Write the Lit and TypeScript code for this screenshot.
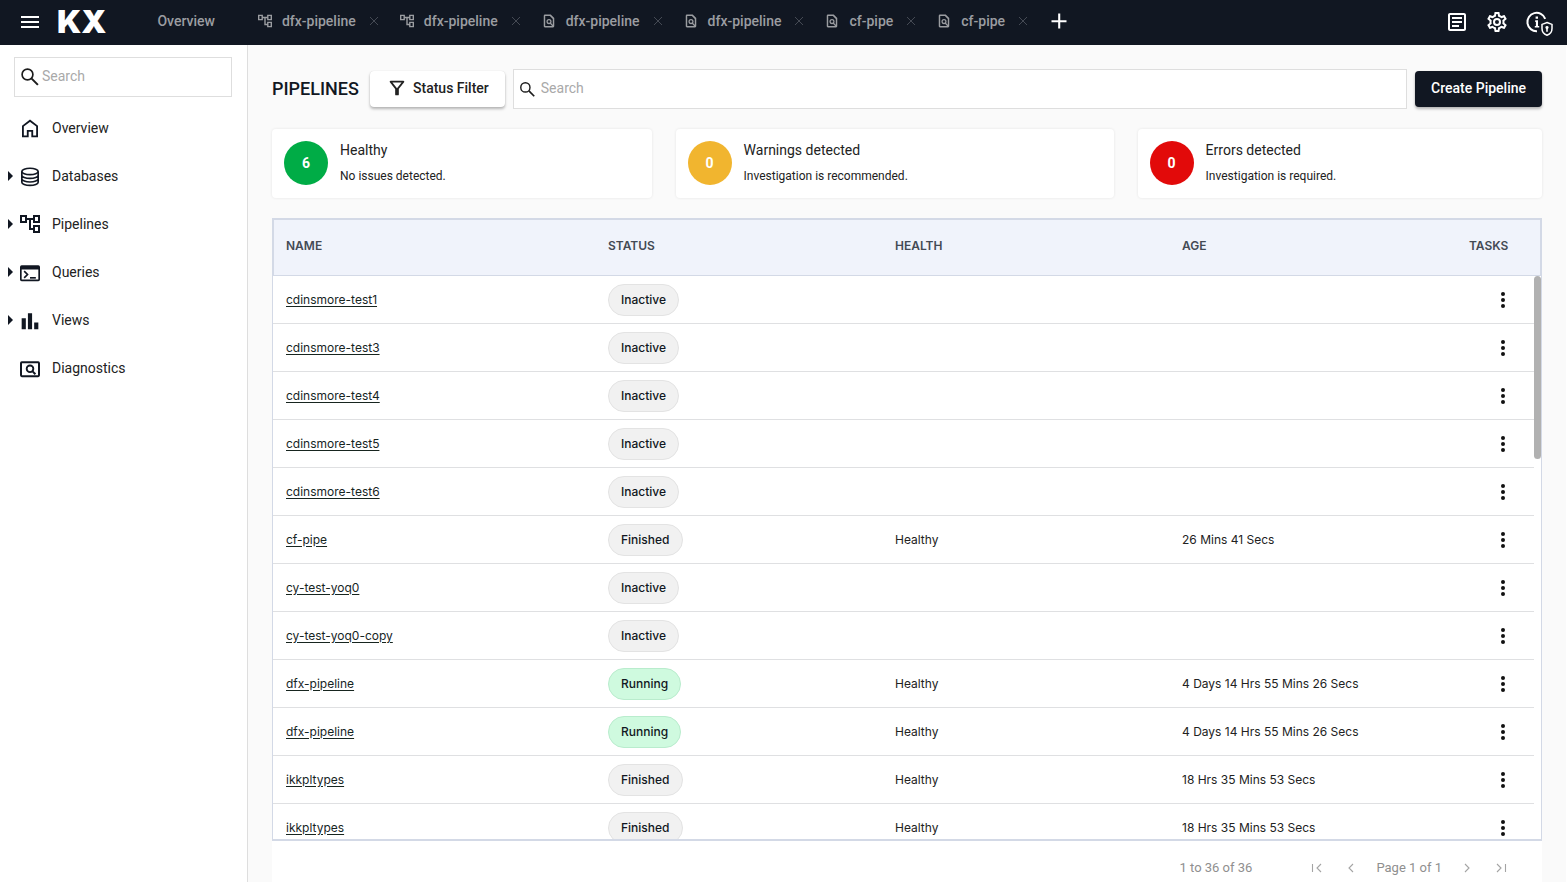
import { LitElement, html, css, svg, nothing } from "lit";
import { customElement, property, state } from "lit/decorators.js";
import { classMap } from "lit/directives/class-map.js";

const ICONS: Record<string, unknown> = {
  menu: svg`<path d="M3 6h18v2H3zM3 11h18v2H3zM3 16h18v2H3z"/>`,
  tree: svg`<path transform="matrix(1.2 0 0 1.2 -2.4 -2.4)" d="M22 11V3h-7v3H9V3H2v8h7V8h2v10h4v3h7v-8h-7v3h-2V8h2v3h7zM7 9H4V5h3v4zm10 6h3v4h-3v-4zm0-10h3v4h-3V5z"/>`,
  page: svg`<path fill-rule="evenodd" d="M6 1h9l6 6v14a2 2 0 0 1-2 2H5a2 2 0 0 1-2-2V3a2 2 0 0 1 2-2zM5.500 3.500v17h13v-12l-5-5z"/><circle cx="12" cy="13" r="3.300" fill="none" stroke="currentColor" stroke-width="2.200"/><path d="M14 15.500l5 5" stroke="currentColor" stroke-width="2.200"/>`,
  close: svg`<path d="M0 0l24 24M24 0L0 24" stroke="currentColor" stroke-width="3" fill="none"/>`,
  plus: svg`<path d="M11 3h2.500v8H21v2.500h-7.500V21H11v-7.500H3V11h8z"/>`,
  article: svg`<path d="M19 5v14H5V5h14m0-2H5c-1.100 0-2 .9-2 2v14c0 1.100.9 2 2 2h14c1.100 0 2-.9 2-2V5c0-1.100-.9-2-2-2zM14 17H7v-2h7v2zm3-4H7v-2h10v2zm0-4H7V7h10v2z"/>`,
  gear: svg`<path fill-rule="evenodd" d="M19.430 12.980c.04-.32.07-.64.07-.98 0-.34-.03-.66-.07-.98l2.110-1.650c.19-.15.24-.42.12-.64l-2-3.460c-.09-.16-.26-.25-.44-.25-.06 0-.12.01-.17.03l-2.490 1c-.52-.4-1.080-.73-1.690-.98l-.38-2.650C14.460 2.180 14.250 2 14 2h-4c-.25 0-.46.18-.49.42l-.38 2.650c-.61.25-1.170.59-1.690.98l-2.490-1c-.06-.02-.12-.03-.18-.03-.17 0-.34.09-.43.25l-2 3.460c-.13.22-.07.49.12.64l2.110 1.650c-.04.32-.07.65-.07.98 0 .33.03.66.07.98l-2.110 1.650c-.19.15-.24.42-.12.64l2 3.460c.09.16.26.25.44.25.06 0 .12-.01.17-.03l2.490-1c.52.4 1.080.73 1.690.98l.38 2.650c.03.24.24.42.49.42h4c.25 0 .46-.18.49-.42l.38-2.650c.61-.25 1.170-.59 1.690-.98l2.490 1c.06.02.12.03.18.03.17 0 .34-.09.43-.25l2-3.460c.12-.22.07-.49-.12-.64l-2.110-1.650zm-1.980-1.710c.04.31.05.52.05.73 0 .21-.02.43-.05.73l-.14 1.130.89.7 1.080.84-.7 1.210-1.270-.51-1.040-.42-.9.68c-.43.32-.84.56-1.250.73l-1.060.43-.16 1.130-.2 1.350h-1.400l-.19-1.350-.16-1.130-1.060-.43c-.43-.18-.83-.41-1.230-.71l-.91-.7-1.060.43-1.270.51-.7-1.210 1.080-.84.89-.7-.14-1.130c-.03-.31-.05-.54-.05-.74s.02-.43.05-.73l.14-1.130-.89-.7-1.080-.84.7-1.210 1.270.51 1.040.42.9-.68c.43-.32.84-.56 1.250-.73l1.060-.43.16-1.130.2-1.350h1.390l.19 1.350.16 1.130 1.060.43c.43.18.83.41 1.230.71l.91.7 1.060-.43 1.270-.51.7 1.210-1.070.85-.89.7.14 1.130z"/><circle cx="12" cy="12" r="3" fill="none" stroke="currentColor" stroke-width="2"/>`,
  info: svg`<path d="M20.200 8.800A9.200 9.200 0 1 0 12 21.200" fill="none" stroke="currentColor" stroke-width="2"/><path d="M10.200 10.300h2.800v5.700h1.200v1.600h-4.400V16h1.100v-4.100h-.7zM10.600 6.500h2.400v2.300h-2.400z"/><path d="M22 12.500l5 1.900v4c0 3.200-2.100 5.700-5 6.800-2.900-1.100-5-3.600-5-6.800v-4z" fill="none" stroke="currentColor" stroke-width="1.500"/><path d="M22 15.900a1.600 1.600 0 0 1 .8 3v2.800h-1.600v-2.800a1.600 1.600 0 0 1 .8-3z"/>`,
  search: svg`<circle cx="9" cy="9" r="6.500" fill="none" stroke="currentColor" stroke-width="2"/><path d="M14 14l7.500 7.500" fill="none" stroke="currentColor" stroke-width="2.400"/>`,
  home: svg`<path d="M3.500 22V9.700L12 3.300l8.500 6.400V22h-5.800v-6.500H9.300V22z" fill="none" stroke="currentColor" stroke-width="2.200"/>`,
  database: svg`<g fill="none" stroke="currentColor" stroke-width="2"><ellipse cx="12" cy="6.500" rx="9.800" ry="3.800"/><path d="M2.200 6.500v13c0 2.100 4.400 3.800 9.800 3.800s9.800-1.700 9.800-3.800v-13M2.200 11c0 2.100 4.400 3.800 9.800 3.800s9.800-1.700 9.800-3.800M2.200 15.400c0 2.100 4.400 3.800 9.800 3.800s9.800-1.700 9.800-3.800"/></g>`,
  terminal: svg`<path fill-rule="evenodd" d="M2 4h20a2 2 0 0 1 2 2v15a2 2 0 0 1-2 2H2a2 2 0 0 1-2-2V6a2 2 0 0 1 2-2zm0 5v12h20V9z"/><path d="M5 11l4 4-4 4" fill="none" stroke="currentColor" stroke-width="2"/><path d="M12 18h7v2h-7z"/>`,
  bars: svg`<path d="M2 10h5v13H2zM9.500 4h5v19h-5zM17 15h5v8h-5z"/>`,
  diagnose: svg`<rect x="1.200" y="5.200" width="21.600" height="16.600" rx="1" fill="none" stroke="currentColor" stroke-width="2.400"/><circle cx="12" cy="13" r="4" fill="none" stroke="currentColor" stroke-width="2.200"/><path d="M14.500 15.500l4 4" stroke="currentColor" stroke-width="2.400"/>`,
  funnel: svg`<path fill-rule="evenodd" d="M7 6h10l-5.010 6.300zM4.250 5.610C6.270 8.200 10 13 10 13v6c0 .55.45 1 1 1h2c.55 0 1-.45 1-1v-6s3.720-4.800 5.740-7.390C20.250 4.950 19.780 4 18.950 4H5.040c-.83 0-1.300.95-.79 1.610z"/>`,
  dots: svg`<circle cx="12" cy="4.800" r="2.400"/><circle cx="12" cy="12" r="2.400"/><circle cx="12" cy="19.200" r="2.400"/>`,
  first: svg`<path d="M3 4v16M20 4l-8 8 8 8" fill="none" stroke="currentColor" stroke-width="2.200"/>`,
  prev: svg`<path d="M16 4l-8 8 8 8" fill="none" stroke="currentColor" stroke-width="2.200"/>`,
  next: svg`<path d="M8 4l8 8-8 8" fill="none" stroke="currentColor" stroke-width="2.200"/>`,
  last: svg`<path d="M21 4v16M4 4l8 8-8 8" fill="none" stroke="currentColor" stroke-width="2.200"/>`,
};

@customElement("kx-icon")
class KxIcon extends LitElement {
  static styles = css`
    :host { display: inline-flex; width: 20px; height: 20px; flex: none; }
    .glyph { width: 100%; height: 100%; fill: currentColor; overflow: visible; }
  `;
  @property() name = "";
  render() {
    return html`<svg class="glyph" viewBox="0 0 24 24" aria-hidden="true">${ICONS[this.name]}</svg>`;
  }
}

@customElement("kx-topbar")
class KxTopbar extends LitElement {
  static styles = css`
    :host { display: flex; align-items: center; height: 45px; padding: 0 18px 1px; background: #111722; color: #fff; box-sizing: border-box; }
    button { border: 0; padding: 0; background: none; color: inherit; font: inherit; display: inline-flex; cursor: pointer; }
    .menu kx-icon { width: 24px; height: 24px; }
    .logo { margin-left: 15px; font: 900 32px/44px Inter, sans-serif; color: #fff; text-decoration: none; }
    .tabs { display: flex; align-items: center; flex: 1; margin-left: 51px; padding-bottom: 2px; font: 500 14px/20px Roboto, sans-serif; color: #9b9da1; }
    .tab { display: flex; align-items: center; margin-right: 22px; }
    .tab.home { margin-right: 43px; }
    .tab a { display: flex; align-items: center; gap: 10px; color: inherit; text-decoration: none; }
    .tab a kx-icon { width: 14px; height: 14px; }
    .close { margin-left: 14px; color: #454a54; }
    .close kx-icon { width: 8px; height: 8px; }
    .add { color: #fff; }
    .add kx-icon { width: 20px; height: 20px; }
    .actions { display: flex; gap: 16px; }
    .actions kx-icon { width: 24px; height: 24px; }
  `;
  tabs = [
    ["tree", "dfx-pipeline"],
    ["tree", "dfx-pipeline"],
    ["page", "dfx-pipeline"],
    ["page", "dfx-pipeline"],
    ["page", "cf-pipe"],
    ["page", "cf-pipe"],
  ];
  render() {
    return html`
      <button class="menu" aria-label="Menu"><kx-icon name="menu"></kx-icon></button>
      <a class="logo" href="#">KX</a>
      <nav class="tabs" aria-label="Open tabs">
        <div class="tab home"><a href="#">Overview</a></div>
        ${this.tabs.map(
          ([icon, label]) => html`<div class="tab">
            <a href="#"><kx-icon name=${icon}></kx-icon>${label}</a>
            <button class="close" aria-label="Close tab"><kx-icon name="close"></kx-icon></button>
          </div>`
        )}
        <button class="add" aria-label="New tab"><kx-icon name="plus"></kx-icon></button>
      </nav>
      <div class="actions">
        <button aria-label="Documents"><kx-icon name="article"></kx-icon></button>
        <button aria-label="Settings"><kx-icon name="gear"></kx-icon></button>
        <button aria-label="About"><kx-icon name="info"></kx-icon></button>
      </div>
    `;
  }
}

@customElement("kx-search")
class KxSearch extends LitElement {
  static styles = css`
    :host { display: block; }
    .box { display: flex; align-items: center; gap: 2px; height: 40px; box-sizing: border-box; padding: 0 5px; background: #fff; border: 1px solid #dedede; color: #1c1c1c; }
    :host([roomy]) .box { gap: 5px; }
    :host([roomy]) kx-icon { width: 17px; height: 17px; }
    input { flex: 1; min-width: 0; border: 0; outline: 0; padding: 0 0 2px; background: none; font: 400 14px/20px Roboto, sans-serif; color: #222; }
    input::placeholder { color: #a9a9a9; opacity: 1; }
  `;
  render() {
    return html`<label class="box"><kx-icon name="search"></kx-icon><input type="text" placeholder="Search" aria-label="Search" /></label>`;
  }
}

@customElement("kx-sidebar")
class KxSidebar extends LitElement {
  static styles = css`
    :host { display: block; box-sizing: border-box; width: 248px; flex: none; padding-top: 12px; background: #fff; border-right: 1px solid #dedede; }
    kx-search { margin: 0 15px 7px 14px; }
    ul { list-style: none; margin: 0; padding: 0; }
    a { display: flex; align-items: center; height: 48px; padding-left: 8px; font: 400 14px/20px Roboto, sans-serif; color: #222; text-decoration: none; }
    .arrow { width: 12px; flex: none; display: flex; }
    .arrow.open::before { content: ""; border: 5px solid transparent; border-left-color: #111722; border-right-width: 0; }
    kx-icon { color: #111722; margin-right: 12px; }
  `;
  items: [string, string, boolean][] = [
    ["home", "Overview", false],
    ["database", "Databases", true],
    ["tree", "Pipelines", true],
    ["terminal", "Queries", true],
    ["bars", "Views", true],
    ["diagnose", "Diagnostics", false],
  ];
  render() {
    return html`
      <kx-search></kx-search>
      <ul>
        ${this.items.map(
          ([icon, label, open]) => html`<li>
            <a href="#"><span class=${classMap({ arrow: true, open })}></span><kx-icon name=${icon}></kx-icon>${label}</a>
          </li>`
        )}
      </ul>
    `;
  }
}

@customElement("kx-health-card")
class KxHealthCard extends LitElement {
  static styles = css`
    :host { display: flex; align-items: flex-start; gap: 12px; flex: 1 1 auto; padding: 12px; height: 69px; box-sizing: border-box; background: #fff; border-radius: 4px; box-shadow: 0 0 3px rgba(0, 0, 0, 0.09); font-family: Roboto, sans-serif; color: #222; }
    .count { width: 44px; height: 44px; flex: none; border-radius: 50%; color: #fff; font-weight: 700; font-size: 14px; line-height: 44px; text-align: center; }
    .ok { background: #00ac46; }
    .warn { background: #f1b52f; }
    .error { background: #e20a0a; }
    .title { margin: 0; font-size: 14px; line-height: 18px; }
    .note { margin: 8px 0 0; font-size: 12px; line-height: 18px; }
  `;
  @property() tone = "ok";
  @property() count = "0";
  @property() heading = "";
  @property() note = "";
  render() {
    return html`
      <div class="count ${this.tone}">${this.count}</div>
      <div>
        <p class="title">${this.heading}</p>
        <p class="note">${this.note}</p>
      </div>
    `;
  }
}

interface Pipeline { name: string; status: string; health?: string; age?: string }

@customElement("kx-pipeline-table")
class KxPipelineTable extends LitElement {
  static styles = css`
    :host { display: flex; flex-direction: column; min-height: 0; background: #fff; color: #222; }
    .grid { flex: 1; min-height: 0; display: flex; flex-direction: column; position: relative; border: 1px solid #d3d9e6; border-bottom-width: 2px; }
    table { flex: 1; min-height: 0; display: flex; flex-direction: column; font: 400 12px/20px Inter, sans-serif; }
    thead { display: block; border: 1px solid #d3d9e6; background: #f0f3fb; }
    tbody { display: block; flex: 1; min-height: 0; overflow: hidden; margin-right: 7px; }
    tr { display: grid; grid-template-columns: 322fr 287fr 287fr 287fr 83px; align-items: center; }
    thead tr { height: 51px; padding-bottom: 4px; }
    tbody tr { grid-template-columns: 322fr 287fr 287fr 287fr 77px; height: 48px; box-sizing: border-box; padding-left: 1px; border-bottom: 1px solid #dfe0e2; }
    th { padding: 0 0 0 12px; text-align: left; font-weight: 600; color: #434a54; }
    td { padding: 0 0 0 12px; }
    td a { color: #17251f; text-underline-offset: 2px; }
    .pill { display: inline-block; box-sizing: border-box; height: 32px; padding: 0 12px; border: 1px solid #e3e3e3; border-radius: 16px; background: #f1f1f1; line-height: 30px; font-weight: 500; color: #111722; vertical-align: middle; }
    .pill.running { background: #cffadf; border-color: #b9eccd; }
    td.tasks { padding-left: 34px; }
    .more { display: flex; border: 0; padding: 2px; background: none; color: #111; cursor: pointer; }
    .scroll { position: absolute; top: 57px; right: 0; width: 7px; height: 183px; border-radius: 4px; background: #b1b1b1; }
    .pager { display: flex; align-items: center; justify-content: flex-end; height: 41px; box-sizing: border-box; padding: 13px 35px 0 0; font: 400 13px/28px Roboto, sans-serif; color: #8f8f8f; }
    .pager span { white-space: nowrap; }
    .range { margin-right: 59px; }
    .pager button { display: flex; border: 0; padding: 0; background: none; color: #a4a4a4; }
    .pager button kx-icon { width: 12px; height: 12px; }
    .back { display: flex; gap: 22px; margin-right: 19px; }
    .forward { display: flex; gap: 22px; margin-left: 19px; }
  `;
  @state() rows: Pipeline[] = [
    ...["cdinsmore-test1", "cdinsmore-test3", "cdinsmore-test4", "cdinsmore-test5", "cdinsmore-test6"].map((name) => ({ name, status: "Inactive" })),
    { name: "cf-pipe", status: "Finished", health: "Healthy", age: "26 Mins 41 Secs" },
    { name: "cy-test-yoq0", status: "Inactive" },
    { name: "cy-test-yoq0-copy", status: "Inactive" },
    { name: "dfx-pipeline", status: "Running", health: "Healthy", age: "4 Days 14 Hrs 55 Mins 26 Secs" },
    { name: "dfx-pipeline", status: "Running", health: "Healthy", age: "4 Days 14 Hrs 55 Mins 26 Secs" },
    { name: "ikkpltypes", status: "Finished", health: "Healthy", age: "18 Hrs 35 Mins 53 Secs" },
    { name: "ikkpltypes", status: "Finished", health: "Healthy", age: "18 Hrs 35 Mins 53 Secs" },
  ];
  render() {
    return html`
      <div class="grid">
        <table>
          <thead>
            <tr><th>NAME</th><th>STATUS</th><th>HEALTH</th><th>AGE</th><th>TASKS</th></tr>
          </thead>
          <tbody>
            ${this.rows.map(
              (r) => html`<tr>
                <td><a href="#">${r.name}</a></td>
                <td><span class=${classMap({ pill: true, running: r.status === "Running" })}>${r.status}</span></td>
                <td>${r.health ?? nothing}</td>
                <td>${r.age ?? nothing}</td>
                <td class="tasks"><button class="more" aria-label="Tasks"><kx-icon name="dots"></kx-icon></button></td>
              </tr>`
            )}
          </tbody>
        </table>
        <div class="scroll"></div>
      </div>
      <div class="pager">
        <span class="range">1 to 36 of 36</span>
        <div class="back">
          <button aria-label="First page"><kx-icon name="first"></kx-icon></button>
          <button aria-label="Previous page"><kx-icon name="prev"></kx-icon></button>
        </div>
        <span>Page 1 of 1</span>
        <div class="forward">
          <button aria-label="Next page"><kx-icon name="next"></kx-icon></button>
          <button aria-label="Last page"><kx-icon name="last"></kx-icon></button>
        </div>
      </div>
    `;
  }
}

@customElement("app-root")
class AppRoot extends LitElement {
  static styles = css`
    :host { display: flex; flex-direction: column; height: 100vh; overflow: hidden; background: #fafafa; font-family: Roboto, sans-serif; }
    .body { flex: 1; min-height: 0; display: flex; }
    main { flex: 1; min-width: 0; display: flex; flex-direction: column; padding: 24px 24px 0; border-right: 1px solid #fff; }
    .toolbar { display: flex; align-items: center; gap: 8px; }
    h1 { margin: 0; min-width: 90px; font-size: 18px; line-height: 24px; font-weight: 500; color: #111722; }
    .toolbar kx-search { flex: 1; }
    .btn { display: flex; align-items: center; height: 36px; border: 0; border-radius: 4px; padding: 0 16px 2px; font: 500 14px/20px Roboto, sans-serif; background: #fff; color: #222; box-shadow: 0 2px 3px rgba(0, 0, 0, 0.28), 0 0 1px rgba(0, 0, 0, 0.15); white-space: nowrap; }
    .btn kx-icon { width: 22px; height: 22px; margin-right: 5px; }
    .btn.primary { background: #111722; color: #fff; }
    .cards { display: flex; gap: 24px; margin: 20px 0; }
    kx-pipeline-table { flex: 1; }
  `;
  render() {
    return html`
      <kx-topbar></kx-topbar>
      <div class="body">
        <kx-sidebar></kx-sidebar>
        <main>
          <div class="toolbar">
            <h1>PIPELINES</h1>
            <button class="btn"><kx-icon name="funnel"></kx-icon>Status Filter</button>
            <kx-search roomy></kx-search>
            <button class="btn primary">Create Pipeline</button>
          </div>
          <div class="cards">
            <kx-health-card tone="ok" count="6" heading="Healthy" note="No issues detected."></kx-health-card>
            <kx-health-card tone="warn" count="0" heading="Warnings detected" note="Investigation is recommended."></kx-health-card>
            <kx-health-card tone="error" count="0" heading="Errors detected" note="Investigation is required."></kx-health-card>
          </div>
          <kx-pipeline-table></kx-pipeline-table>
        </main>
      </div>
    `;
  }
}
